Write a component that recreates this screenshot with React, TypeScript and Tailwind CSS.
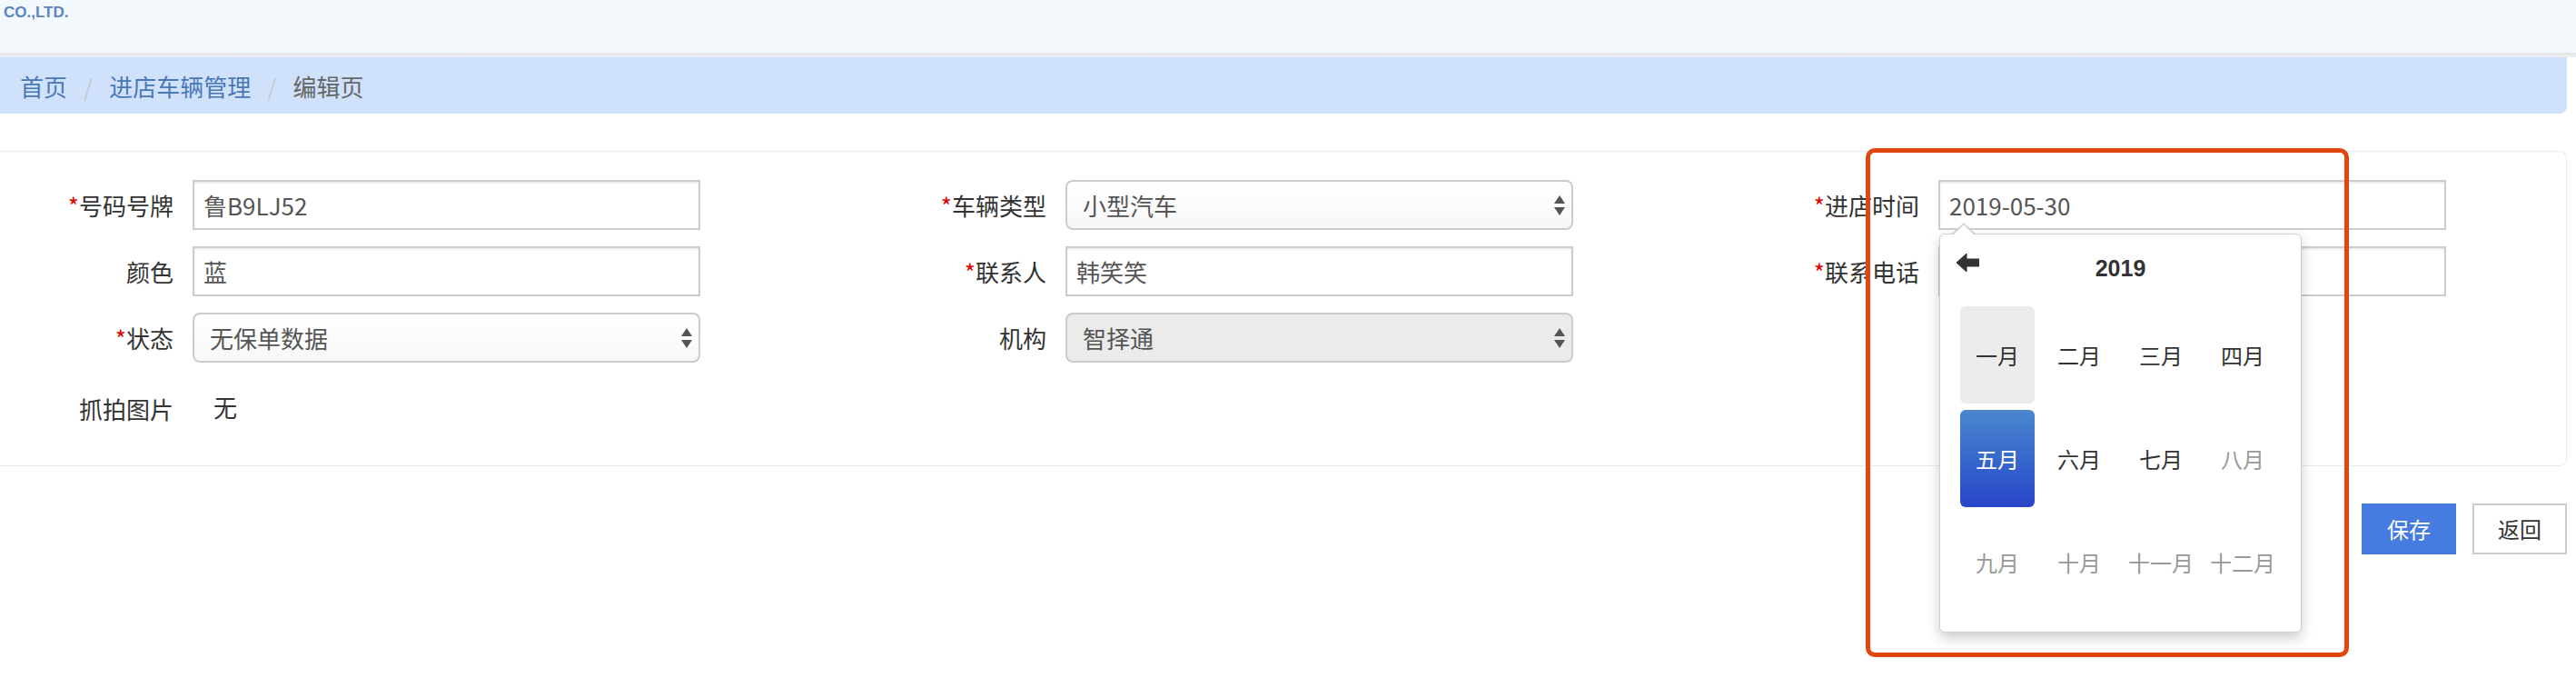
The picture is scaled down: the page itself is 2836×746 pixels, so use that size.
import React from 'react';

const months = [
    { name: '一月', state: 'hover' },
    { name: '二月', state: '' },
    { name: '三月', state: '' },
    { name: '四月', state: '' },
    { name: '五月', state: 'active' },
    { name: '六月', state: '' },
    { name: '七月', state: '' },
    { name: '八月', state: 'disabled' },
    { name: '九月', state: 'disabled' },
    { name: '十月', state: 'disabled' },
    { name: '十一月', state: 'disabled' },
    { name: '十二月', state: 'disabled' },
];

function Field({ label, required, children }: { label: string; required?: boolean; children?: React.ReactNode }) {
    return (
        <div className="flex items-center h-[55px]">
            <label className="w-[191px] shrink-0 text-right text-[26px] leading-none text-[#333]">
                {required && <span className="text-[#e00000]">*</span>}
                {label}
            </label>
            <div className="ml-[21px] relative">{children}</div>
        </div>
    );
}

function TextInput({ value }: { value: string }) {
    return (
        <input
            readOnly
            defaultValue={value}
            className="block w-[559px] h-[55px] border-2 border-[#cccccc] bg-white pl-[10px] text-[26px] text-[#555] outline-none shadow-[inset_0_2px_2px_rgba(0,0,0,0.08)] font-['Noto_Sans_CJK_SC',sans-serif]"
        />
    );
}

function SelectBox({ value, disabled }: { value: string; disabled?: boolean }) {
    return (
        <div
            className={
                disabled
                    ? 'flex items-center w-[559px] h-[55px] border-2 border-[#cccccc] rounded-[8px] bg-[#ebebeb] pl-[17px] pr-[7px] text-[26px] text-[#555]'
                    : 'flex items-center w-[559px] h-[55px] border-2 border-[#cccccc] rounded-[8px] bg-linear-to-b from-white to-[#f7f7f7] pl-[17px] pr-[7px] text-[26px] text-[#555]'
            }
        >
            <span className="flex-1">{value}</span>
            <svg width="12" height="22" viewBox="0 0 12 22">
                <path d="M6 0 L12 9 L0 9 Z" fill="#555" />
                <path d="M0 13 L12 13 L6 22 Z" fill="#555" />
            </svg>
        </div>
    );
}

function MonthPicker() {
    return (
        <div className="absolute left-[1px] top-[59px] z-10 w-[399px] h-[439px] bg-white border border-[#d0d0d0] rounded-[6px] shadow-[0_6px_14px_rgba(0,0,0,0.2)]">
            {/* 小三角 */}
            <div className="absolute left-[12px] top-[-13px] w-0 h-0 border-x-[14px] border-x-transparent border-b-[13px] border-b-[#cfcfcf]" />
            <div className="absolute left-[14px] top-[-11px] w-0 h-0 border-x-[12px] border-x-transparent border-b-[12px] border-b-white" />

            <div className="flex items-start h-[79px] px-[18px] pt-[21px]">
                <svg width="25" height="20" viewBox="0 0 25 20" className="shrink-0">
                    <path d="M0 10 L11 0 L11 6 L25 6 L25 14 L11 14 L11 20 Z" fill="#333" strokeLinejoin="round" stroke="#333" strokeWidth="1" />
                </svg>
                <div className="flex-1 text-center mt-[3px] text-[25px] leading-[26px] font-bold text-[#333] font-['Liberation_Sans',sans-serif]">
                    2019
                </div>
                <div className="w-[25px] shrink-0" />
            </div>

            <div className="grid grid-cols-[82px_82px_82px_82px] gap-x-[8px] gap-y-[7px] px-[22px]">
                {months.map((m) => (
                    <div
                        key={m.name}
                        className={
                            m.state === 'active'
                                ? 'h-[107px] rounded-[6px] flex items-center justify-center text-[24px] text-white bg-linear-to-b from-[#4b86ce] to-[#2944c8]'
                                : m.state === 'hover'
                                ? 'h-[107px] rounded-[6px] flex items-center justify-center text-[24px] text-[#333] bg-[#ececec]'
                                : m.state === 'disabled'
                                ? 'h-[107px] rounded-[6px] flex items-center justify-center text-[24px] text-[#999] whitespace-nowrap'
                                : 'h-[107px] rounded-[6px] flex items-center justify-center text-[24px] text-[#333]'
                        }
                    >
                        {m.name}
                    </div>
                ))}
            </div>
        </div>
    );
}

export default function App() {
    return (
        <div className="relative min-h-screen bg-white font-['Noto_Sans_CJK_SC',sans-serif]">
            {/* 顶部 */}
            <div className="h-[58px] bg-[#f3f8fd] pl-[4px] pt-[5px]">
                <div className="font-['Liberation_Sans',sans-serif] font-bold text-[17px] leading-none text-[#5b84c1]">
                    CO.,LTD.
                </div>
            </div>
            <div className="h-[5px] bg-linear-to-b from-[#e2e3e5] to-[#edf0f3]" />

            <div className="pr-[10px]">
                {/* 面包屑 */}
                <div className="h-[62px] bg-[#d0e1fb] rounded-br-[8px] flex items-center pl-[22px] text-[26px]">
                    <span className="text-[#4a78b6]">首页</span>
                    <span className="mx-[18px] text-[#c2c9d2]">/</span>
                    <span className="text-[#4a78b6]">进店车辆管理</span>
                    <span className="mx-[18px] text-[#c2c9d2]">/</span>
                    <span className="text-[#666]">编辑页</span>
                </div>

                {/* 表单 */}
                <div className="mt-[41px] border-y border-r border-[#e3ebf3] rounded-r-[8px] pt-[31px] pb-[35px]">
                    <div className="grid grid-cols-[961px_961px_1fr] gap-y-[18px]">
                        <Field label="号码号牌" required>
                            <TextInput value="鲁B9LJ52" />
                        </Field>
                        <Field label="车辆类型" required>
                            <SelectBox value="小型汽车" />
                        </Field>
                        <Field label="进店时间" required>
                            <TextInput value="2019-05-30" />
                            <MonthPicker />
                        </Field>

                        <Field label="颜色">
                            <TextInput value="蓝" />
                        </Field>
                        <Field label="联系人" required>
                            <TextInput value="韩笑笑" />
                        </Field>
                        <Field label="联系电话" required>
                            <TextInput value="" />
                        </Field>

                        <Field label="状态" required>
                            <SelectBox value="无保单数据" />
                        </Field>
                        <Field label="机构">
                            <SelectBox value="智择通" disabled />
                        </Field>
                        <div />

                        <div className="mt-[5px]">
                            <Field label="抓拍图片">
                                <span className="pl-[23px] text-[26px] leading-none text-[#333]">无</span>
                            </Field>
                        </div>
                    </div>
                </div>

                {/* 按钮 */}
                <div className="mt-[41px] flex justify-end gap-[18px]">
                    <button className="w-[104px] h-[56px] bg-[#467be0] text-white text-[24px]">保存</button>
                    <button className="w-[104px] h-[56px] bg-white border-2 border-[#cccccc] text-[#333] text-[24px]">返回</button>
                </div>
            </div>

            {/* 标注框 */}
            <div className="pointer-events-none absolute left-[2054px] top-[163px] w-[532px] h-[560px] border-[5px] border-[#e0470f] rounded-[10px] z-20" />
        </div>
    );
}
